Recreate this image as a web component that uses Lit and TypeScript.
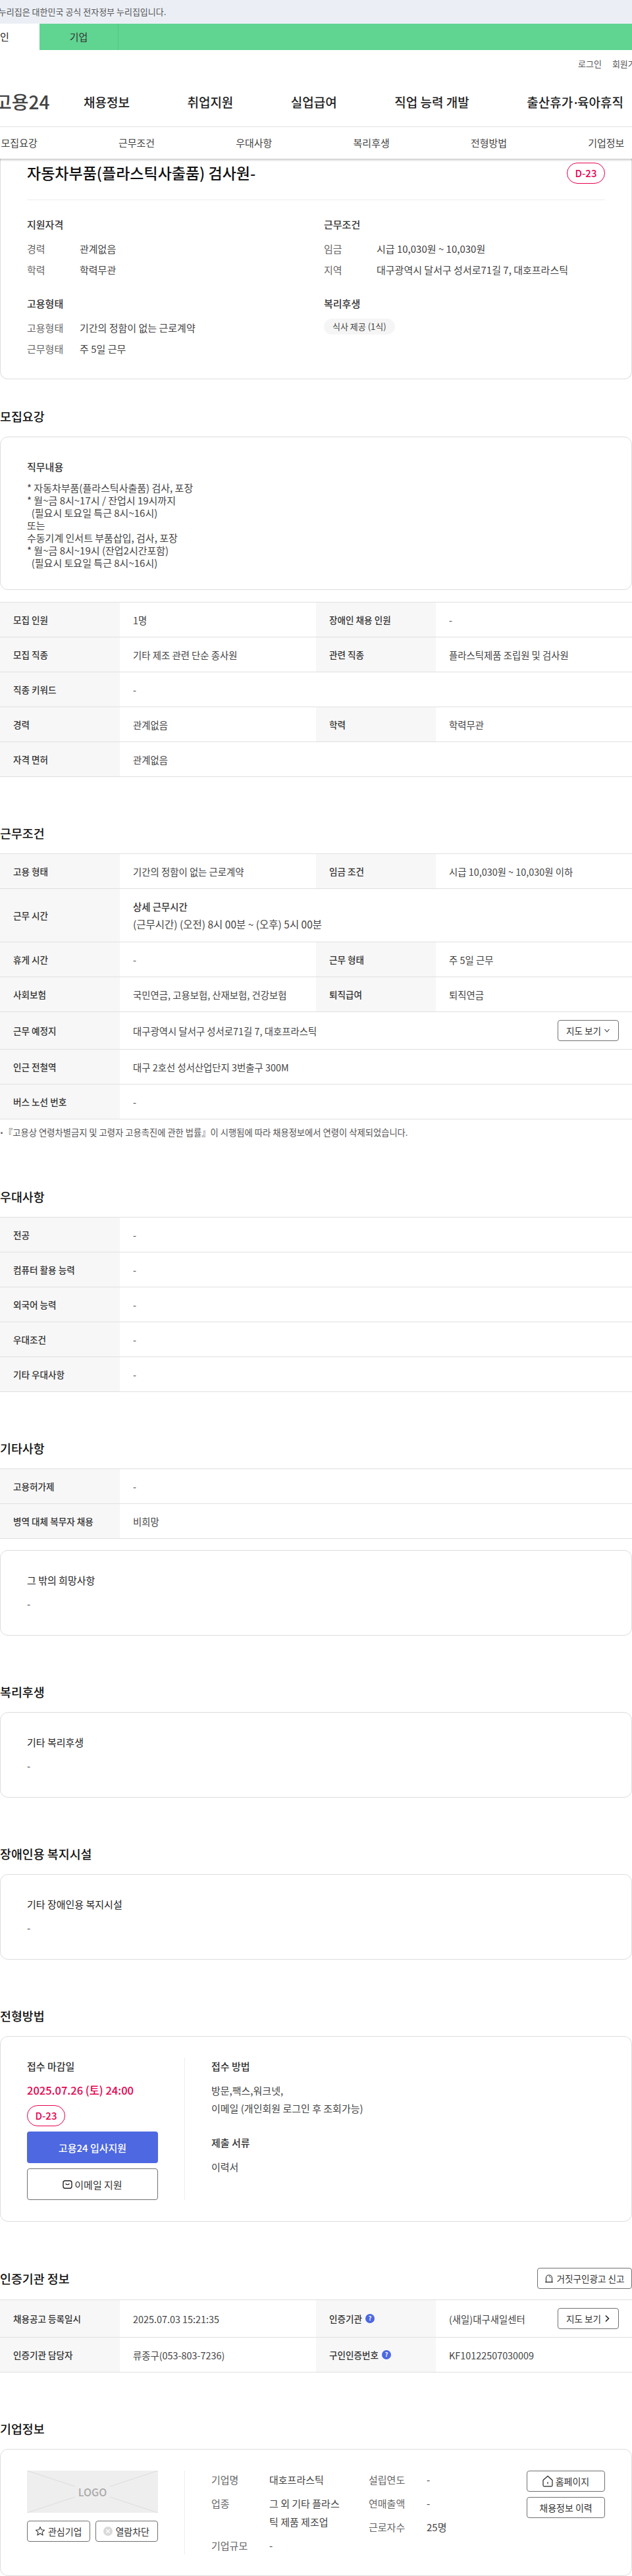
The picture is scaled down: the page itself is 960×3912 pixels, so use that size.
import { LitElement, html, css } from "lit";
import { customElement } from "lit/decorators.js";

type Row = { l: string; v: unknown; l2?: string; v2?: unknown; cls?: string };

const iconChevronDown = html`<svg class="ico" width="10" height="10" viewBox="0 0 10 10"><path d="M1.5 3 5 7l3.5-4" fill="none" stroke="#333" stroke-width="1.1"/></svg>`;
const iconChevronRight = html`<svg class="ico" width="10" height="12" viewBox="0 0 10 12"><path d="M3 1.5 7.5 6 3 10.5" fill="none" stroke="#222" stroke-width="1.6"/></svg>`;
const iconHelp = html`<span class="help">?</span>`;
const iconMail = html`<svg class="ico" width="15" height="15" viewBox="0 0 15 15"><rect x="1" y="1.8" width="13" height="11.4" rx="3" fill="none" stroke="#222" stroke-width="1.4"/><path d="M4.6 6.2q2.9 3 5.8 0" fill="none" stroke="#222" stroke-width="1.3"/></svg>`;
const iconStar = html`<svg class="ico" width="16" height="16" viewBox="0 0 16 16"><path d="M8 1.5l1.9 4.3 4.6.5-3.4 3.1 1 4.6L8 11.2l-4.1 2.8 1-4.6L1.5 6.3l4.6-.5z" fill="none" stroke="#333" stroke-width="1.1" stroke-linejoin="round"/></svg>`;
const iconBlock = html`<svg class="ico" width="14" height="14" viewBox="0 0 14 14"><circle cx="7" cy="7" r="7" fill="#d9d9d9"/><path d="M4.3 4.3l5.4 5.4M9.7 4.3 4.3 9.7" stroke="#fff" stroke-width="1.3"/></svg>`;
const iconHome = html`<svg class="ico" width="16" height="18" viewBox="0 0 16 18"><path d="M1 7.5 8 1.2l7 6.3v7.8q0 1.5-1.5 1.5h-11Q1 16.8 1 15.300z" fill="none" stroke="#222" stroke-width="1.2" stroke-linejoin="round"/><path d="M8 10.200v3" stroke="#222" stroke-width="1.2"/></svg>`;
const iconSiren = html`<svg class="ico" width="14" height="14" viewBox="0 0 14 14"><path d="M2.500 12.500V6.500a4.500 4.500 0 0 1 9 0v6zM1 12.700h12" fill="none" stroke="#222" stroke-width="1.1"/><path d="M7 4a2.500 2.500 0 0 1 2.300 2" fill="none" stroke="#222" stroke-width=".9"/></svg>`;

@customElement("app-root")
export class AppRoot extends LitElement {
	static styles = css`
	:host {
		display: block;
		width: 960px;
		height: 3912px;
		overflow: hidden;
		background: #fff;
		color: #222;
		font-family: "Noto Sans CJK KR", "Noto Sans", sans-serif;
		font-size: 15px;
	}

	.gov {
		height: 36px;
		background: #ebeff5;
		color: #555;
		font-size: 13px;
		line-height: 36px;
		white-space: nowrap;
	}
	.gov span { margin-left: -17px; display: inline-block; }

	.usertype {
		display: flex;
		height: 40px;
		background: #60d491;
		margin-left: -60px;
		line-height: 40px;
		text-align: center;
		font-size: 15px;
		color: #333;
	}
	.usertype div { width: 120px; }
	.usertype .on { background: #fff; color: #222; }
	.usertype .off { width: 119px; border-right: 1px solid #55c585; }

	.util {
		display: flex;
		gap: 16px;
		height: 40px;
		padding-left: 878px;
		align-items: center;
		font-size: 13px;
		color: #555;
		white-space: nowrap;
	}

	.gnb {
		display: flex;
		align-items: center;
		height: 76px;
		border-bottom: 1px solid #e5e5e5;
		margin-left: -8px;
		white-space: nowrap;
		font-size: 19px;
		font-weight: 500;
		color: #222;
	}
	.logo { font-size: 28px; font-weight: 500; color: #444; width: 135px; flex: none; }
	.gnb a { margin-right: 87.5px; flex: none; }
	.gnb .dot { letter-spacing: -3px; margin-left: -1px; }

	.tabs {
		position: relative;
		z-index: 2;
		display: grid;
		grid-template-columns: repeat(6, 178.33px);
		margin-left: -60px;
		width: 1080px;
		padding-right: 10px;
		height: 48px;
		line-height: 48px;
		text-align: center;
		color: #444;
		font-size: 15px;
		background: #fff;
		box-shadow: 0 2px 3px rgba(0, 0, 0, 0.22);
	}

	.card {
		box-sizing: border-box;
		border: 1px solid #ddd;
		border-radius: 12px;
		padding: 0 40px;
		background: #fff;
	}
	.summary {
		border-top: none;
		border-top-left-radius: 0;
		border-top-right-radius: 0;
		height: 335px;
	}
	.title-row {
		display: flex;
		justify-content: space-between;
		align-items: flex-start;
		padding: 6px 0 24px;
		border-bottom: 1px solid #eee;
	}
	.title-row h2 {
		margin: 0;
		font-size: 23px;
		line-height: 30px;
		font-weight: 500;
		color: #111;
	}
	.dday {
		box-sizing: border-box;
		width: 58px;
		height: 32px;
		border: 1px solid #e6004d;
		border-radius: 16px;
		color: #e6004d;
		font-size: 15px;
		font-weight: 500;
		line-height: 30px;
		text-align: center;
		flex: none;
		background: #fff;
	}
	.sum-grid {
		display: grid;
		grid-template-columns: 427px 427px;
		column-gap: 24px;
		row-gap: 29px;
		padding-top: 26px;
	}
	.sub {
		font-weight: 500;
		line-height: 22px;
		color: #333;
	}
	.sub.plain { font-weight: 400; color: #222; }
	.pairs { margin-top: 15px; display: grid; row-gap: 10px; }
	.pair { display: flex; line-height: 22px; }
	.pair b { width: 80px; font-weight: 400; color: #666; flex: none; }
	.pair span { color: #444; white-space: nowrap; }
	.chip {
		display: inline-block;
		margin-top: 12px;
		height: 24px;
		line-height: 24px;
		padding: 0 13px;
		border-radius: 12px;
		background: #f5f5f5;
		font-size: 13px;
		color: #444;
	}

	section { margin-top: 71px; }
	section.first { margin-top: 42px; }
	h3 {
		margin: 0 0 17px;
		font-size: 18.4px;
		line-height: 28px;
		font-weight: 500;
		color: #111;
		white-space: nowrap;
	}
	.head-row {
		display: flex;
		justify-content: space-between;
		align-items: center;
		height: 32px;
		margin: -1px 0 16px;
	}
	.head-row h3 { margin: 0; }

	.text-card { padding-top: 34px; padding-bottom: 36px; margin-bottom: 18px; }
	.text-card p { margin: 14px 0 0; line-height: 22px; color: #444; }
	.duty {
		margin: 11px 0 0;
		line-height: 19px;
		color: #444;
		white-space: pre-wrap;
		font-family: inherit;
		font-size: 15px;
	}
	.text-card.duty-card { padding-bottom: 31px; }
	.text-card.last { margin-bottom: 0; }

	.table { border-top: 1px solid #e0e0e0; margin-bottom: 17px; }
	.table.end { margin-bottom: 0; }
	.row {
		box-sizing: border-box;
		display: grid;
		grid-template-columns: 182px 298px 182px 298px;
		min-height: 53px;
		border-bottom: 1px solid #e0e0e0;
		font-size: 14.4px;
		color: #444;
	}
	.row.tall { min-height: 57px; }
	.row.detail { min-height: 81px; }
	.lab {
		display: flex;
		align-items: center;
		gap: 5px;
		padding-left: 20px;
		background: #f7f7f7;
		font-size: 13.6px;
		font-weight: 500;
		color: #333;
	}
	.val {
		display: flex;
		align-items: center;
		justify-content: space-between;
		padding: 0 20px;
		white-space: nowrap;
	}
	.val.wide { grid-column: span 3; }
	.stack { display: block; line-height: 27px; font-size: 15.5px; }
	.stack strong { display: block; font-weight: 500; color: #333; font-size: 14.4px; }
	.help {
		display: inline-block;
		width: 14px;
		height: 14px;
		border-radius: 50%;
		background: #4d68e1;
		color: #fff;
		font-size: 9px;
		line-height: 14px;
		text-align: center;
		font-weight: 700;
	}

	.note {
		display: flex;
		align-items: center;
		margin-top: 10px;
		padding-bottom: 2px;
		line-height: 20px;
		font-size: 13.3px;
		color: #555;
		white-space: nowrap;
	}
	.note i {
		width: 3px;
		height: 3px;
		border-radius: 50%;
		background: #666;
		margin: 0 2px 0 1px;
		flex: none;
	}

	.btn {
		box-sizing: border-box;
		display: inline-flex;
		align-items: center;
		justify-content: center;
		gap: 4px;
		height: 32px;
		border: 1px solid #707070;
		border-radius: 4px;
		background: #fff;
		font-size: 13.6px;
		color: #333;
		white-space: nowrap;
		flex: none;
	}
	.btn.map { width: 93px; }
	.btn.report { width: 144px; }
	.btn.wide { width: 119px; height: 32px; font-size: 14px; }
	.ico { flex: none; display: block; }

	.split { display: flex; padding-top: 32px; padding-bottom: 32px; }
	.side {
		box-sizing: content-box;
		width: 199px;
		padding-right: 40px;
		border-right: 1px solid #eee;
		flex: none;
	}
	.side-line { line-height: 26px; font-weight: 500; color: #333; }
	.date {
		margin: 10px 0;
		line-height: 26px;
		font-size: 16.5px;
		font-weight: 500;
		color: #e6004d;
		white-space: nowrap;
	}
	.apply {
		box-sizing: border-box;
		display: flex;
		align-items: center;
		justify-content: center;
		gap: 3px;
		width: 199px;
		height: 48px;
		border-radius: 4px;
		margin-top: 8px;
		font-size: 15px;
	}
	.apply.blue { background: #4d68e1; color: #fff; font-weight: 500; }
	.apply.line { background: #fff; border: 1px solid #707070; color: #333; }
	.how { padding-left: 40px; }
	.how .side-line.next { margin-top: 25.5px; }
	.how .txt { margin-top: 10px; line-height: 27px; color: #444; white-space: nowrap; }

	.company { height: 193px; }
	.logo-box { position: relative; height: 64px; background: #eee; }
	.logo-box svg { display: block; width: 100%; height: 100%; }
	.logo-box span {
		position: absolute;
		inset: 0;
		text-align: center;
		line-height: 64px;
		font-size: 16px;
		font-weight: 500;
		color: #aaa;
	}
	.mini { display: flex; gap: 8px; margin-top: 12px; }
	.mini .btn { width: 95.5px; font-size: 14px; }
	.info { display: flex; padding-left: 40px; flex: 1; }
	.info-col { display: grid; row-gap: 8px; align-content: start; }
	.info-col + .info-col { margin-left: 38px; }
	.kv { display: flex; line-height: 28px; }
	.kv b { width: 88px; font-weight: 400; color: #666; flex: none; }
	.kv span { width: 113px; color: #444; }
	.info-col + .info-col .kv span { width: 60px; }
	.actions { margin-left: auto; display: grid; row-gap: 8px; align-content: start; }
	`;

	private rows(list: Row[], end = false) {
		return html`<div class="table ${end ? "end" : ""}">
			${list.map(
				(r) => html`<div class="row ${r.cls ?? ""}">
					<div class="lab">${r.l}</div>
					${r.l2
						? html`<div class="val">${r.v}</div>
							<div class="lab">${r.l2}</div>
							<div class="val">${r.v2}</div>`
						: html`<div class="val wide">${r.v}</div>`}
				</div>`
			)}
		</div>`;
	}

	private textCard(title: string, body: string, last = false) {
		return html`<div class="card text-card ${last ? "last" : ""}">
			<div class="sub plain">${title}</div>
			<p>${body}</p>
		</div>`;
	}

	render() {
		return html`
			<div class="gov"><span>이 누리집은 대한민국 공식 전자정부 누리집입니다.</span></div>
			<div class="usertype"><div class="on">개인</div><div class="off">기업</div></div>
			<div class="util"><a>로그인</a><a>회원가입</a></div>
			<nav class="gnb">
				<div class="logo">고용24</div>
				<a>채용정보</a><a>취업지원</a><a>실업급여</a><a>직업 능력 개발</a><a>출산휴가<span class="dot">·</span>육아휴직</a>
			</nav>
			<div class="tabs">
				${["모집요강", "근무조건", "우대사항", "복리후생", "전형방법", "기업정보"].map((t) => html`<div>${t}</div>`)}
			</div>

			<div class="card summary">
				<div class="title-row">
					<h2>자동차부품(플라스틱사출품) 검사원-</h2>
					<div class="dday">D-23</div>
				</div>
				<div class="sum-grid">
					<div>
						<div class="sub">지원자격</div>
						<div class="pairs">
							<div class="pair"><b>경력</b><span>관계없음</span></div>
							<div class="pair"><b>학력</b><span>학력무관</span></div>
						</div>
					</div>
					<div>
						<div class="sub">근무조건</div>
						<div class="pairs">
							<div class="pair"><b>임금</b><span>시급 10,030원 ~ 10,030원</span></div>
							<div class="pair"><b>지역</b><span>대구광역시 달서구 성서로71길 7, 대호프라스틱</span></div>
						</div>
					</div>
					<div>
						<div class="sub">고용형태</div>
						<div class="pairs">
							<div class="pair"><b>고용형태</b><span>기간의 정함이 없는 근로계약</span></div>
							<div class="pair"><b>근무형태</b><span>주 5일 근무</span></div>
						</div>
					</div>
					<div>
						<div class="sub">복리후생</div>
						<span class="chip">식사 제공 (1식)</span>
					</div>
				</div>
			</div>

			<section class="first">
				<h3>모집요강</h3>
				<div class="card text-card duty-card">
					<div class="sub">직무내용</div>
					<pre class="duty">* 자동차부품(플라스틱사출품) 검사, 포장
* 월~금 8시~17시 / 잔업시 19시까지
  (필요시 토요일 특근 8시~16시)
또는
수동기계 인서트 부품삽입, 검사, 포장
* 월~금 8시~19시 (잔업2시간포함)
  (필요시 토요일 특근 8시~16시)</pre>
				</div>
				${this.rows(
					[
						{ l: "모집 인원", v: "1명", l2: "장애인 채용 인원", v2: "-" },
						{ l: "모집 직종", v: "기타 제조 관련 단순 종사원", l2: "관련 직종", v2: "플라스틱제품 조립원 및 검사원" },
						{ l: "직종 키워드", v: "-" },
						{ l: "경력", v: "관계없음", l2: "학력", v2: "학력무관" },
						{ l: "자격 면허", v: "관계없음" },
					],
					true
				)}
			</section>

			<section>
				<h3>근무조건</h3>
				${this.rows(
					[
						{ l: "고용 형태", v: "기간의 정함이 없는 근로계약", l2: "임금 조건", v2: "시급 10,030원 ~ 10,030원 이하" },
						{
							l: "근무 시간",
							cls: "detail",
							v: html`<div class="stack"><strong>상세 근무시간</strong>(근무시간) (오전) 8시 00분 ~ (오후) 5시 00분</div>`,
						},
						{ l: "휴게 시간", v: "-", l2: "근무 형태", v2: "주 5일 근무" },
						{ l: "사회보험", v: "국민연금, 고용보험, 산재보험, 건강보험", l2: "퇴직급여", v2: "퇴직연금" },
						{
							l: "근무 예정지",
							cls: "tall",
							v: html`<span>대구광역시 달서구 성서로71길 7, 대호프라스틱</span>
								<span class="btn map">지도 보기 ${iconChevronDown}</span>`,
						},
						{ l: "인근 전철역", v: "대구 2호선 성서산업단지 3번출구 300M" },
						{ l: "버스 노선 번호", v: "-" },
					],
					true
				)}
				<div class="note"><i></i>『고용상 연령차별금지 및 고령자 고용촉진에 관한 법률』이 시행됨에 따라 채용정보에서 연령이 삭제되었습니다.</div>
			</section>

			<section>
				<h3>우대사항</h3>
				${this.rows(
					[
						{ l: "전공", v: "-" },
						{ l: "컴퓨터 활용 능력", v: "-" },
						{ l: "외국어 능력", v: "-" },
						{ l: "우대조건", v: "-" },
						{ l: "기타 우대사항", v: "-" },
					],
					true
				)}
			</section>

			<section>
				<h3>기타사항</h3>
				${this.rows([
					{ l: "고용허가제", v: "-" },
					{ l: "병역 대체 복무자 채용", v: "비희망" },
				])}
				${this.textCard("그 밖의 희망사항", "-", true)}
			</section>

			<section>
				<h3>복리후생</h3>
				${this.textCard("기타 복리후생", "-", true)}
			</section>

			<section>
				<h3>장애인용 복지시설</h3>
				${this.textCard("기타 장애인용 복지시설", "-", true)}
			</section>

			<section>
				<h3>전형방법</h3>
				<div class="card split">
					<div class="side">
						<div class="side-line">접수 마감일</div>
						<div class="date">2025.07.26 (토) 24:00</div>
						<div class="dday">D-23</div>
						<div class="apply blue">고용24 입사지원</div>
						<div class="apply line">${iconMail}이메일 지원</div>
					</div>
					<div class="how">
						<div class="side-line">접수 방법</div>
						<div class="txt">방문,팩스,워크넷,<br />이메일 (개인회원 로그인 후 조회가능)</div>
						<div class="side-line next">제출 서류</div>
						<div class="txt">이력서</div>
					</div>
				</div>
			</section>

			<section>
				<div class="head-row">
					<h3>인증기관 정보</h3>
					<span class="btn report">${iconSiren}거짓구인광고 신고</span>
				</div>
				<div class="table end">
					<div class="row tall">
						<div class="lab">채용공고 등록일시</div>
						<div class="val">2025.07.03 15:21:35</div>
						<div class="lab">인증기관 ${iconHelp}</div>
						<div class="val"><span>(새일)대구새일센터</span><span class="btn map">지도 보기 ${iconChevronRight}</span></div>
					</div>
					<div class="row">
						<div class="lab">인증기관 담당자</div>
						<div class="val">류종구(053-803-7236)</div>
						<div class="lab">구인인증번호 ${iconHelp}</div>
						<div class="val">KF10122507030009</div>
					</div>
				</div>
			</section>

			<section>
				<h3>기업정보</h3>
				<div class="card split company">
					<div class="side">
						<div class="logo-box">
							<svg viewBox="0 0 199 64" preserveAspectRatio="none"><path d="M0 0 73 24M199 0l-73 24M0 64l73-24M199 64l-73-24" stroke="#dcdcdc" fill="none"/></svg>
							<span>LOGO</span>
						</div>
						<div class="mini">
							<span class="btn">${iconStar}관심기업</span>
							<span class="btn">${iconBlock}열람차단</span>
						</div>
					</div>
					<div class="info">
						<div class="info-col">
							<div class="kv"><b>기업명</b><span>대호프라스틱</span></div>
							<div class="kv"><b>업종</b><span>그 외 기타 플라스틱 제품 제조업</span></div>
							<div class="kv"><b>기업규모</b><span>-</span></div>
						</div>
						<div class="info-col">
							<div class="kv"><b>설립연도</b><span>-</span></div>
							<div class="kv"><b>연매출액</b><span>-</span></div>
							<div class="kv"><b>근로자수</b><span>25명</span></div>
						</div>
						<div class="actions">
							<span class="btn wide">${iconHome}홈페이지</span>
							<span class="btn wide">채용정보 이력</span>
						</div>
					</div>
				</div>
			</section>
		`;
	}
}

declare global {
	interface HTMLElementTagNameMap {
		"app-root": AppRoot;
	}
}
